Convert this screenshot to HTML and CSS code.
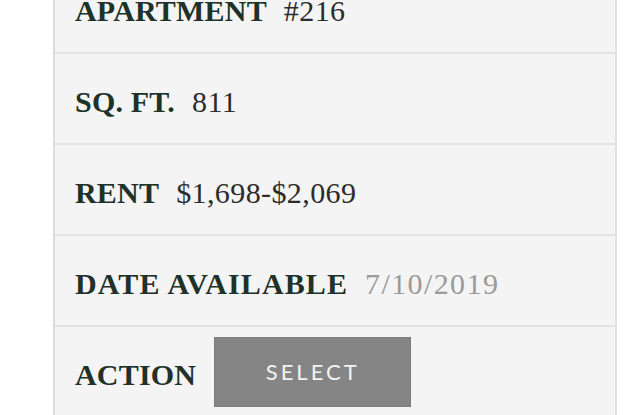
FILE: index.html
```html
<!DOCTYPE html>
<html>
	<head>
		<meta charset="utf-8"/>
		<title>Apartment #216</title>
		<meta name="viewport" content="width=device-width, initial-scale=1"/>
		<link rel="stylesheet" href="styles.css">
	</head>
	<body>
		<div class="unit-card">
			<div class="unit-row">
				<span class="unit-label">Apartment</span>
				<span class="unit-value">#216</span>
			</div>
			<div class="unit-row">
				<span class="unit-label">Sq. Ft.</span>
				<span class="unit-value">811</span>
			</div>
			<div class="unit-row">
				<span class="unit-label">Rent</span>
				<span class="unit-value">$1,698-$2,069</span>
			</div>
			<div class="unit-row">
				<span class="unit-label label-wide">Date Available</span>
				<span class="unit-value value-muted">7/10/2019</span>
			</div>
			<div class="unit-row">
				<span class="unit-label">Action</span>
				<input type="button" value="select" class="select-btn"/>
			</div>
		</div>
	</body>
</html>
```

FILE: styles.css
```css
body{margin: 0px;background: #fff;font-family: 'Liberation Serif', serif;}
.unit-card{margin: -37px 23px 0 53px;background: #f4f4f4;border-left: 2px solid #dcdcdc;border-right: 2px solid #e2e2e2;}
.unit-row{display: flex;flex-direction: row;align-items: center;height: 89px;padding-left: 20px;border-bottom: 2px solid #e3e3e3;}
.unit-label{margin-top: 6px;font-size: 30px;font-weight: 700;text-transform: uppercase;color: #203128;letter-spacing: 0.2px;}
.label-wide{letter-spacing: 1.1px;}
.unit-value{margin: 6px 0 0 17px;font-size: 30px;color: #2b2b2b;letter-spacing: 0.4px;}
.value-muted{color: #9a9a9a;letter-spacing: 1.4px;}
.select-btn{margin-left: 18px;width: 197px;height: 70px;border: 1px solid #7c7c7c;border-radius: 0;background: #858585;color: #f3f3f3;font-family: 'Lato', sans-serif;font-size: 22px;letter-spacing: 3px;text-transform: uppercase;cursor: pointer;outline: none;}
```
